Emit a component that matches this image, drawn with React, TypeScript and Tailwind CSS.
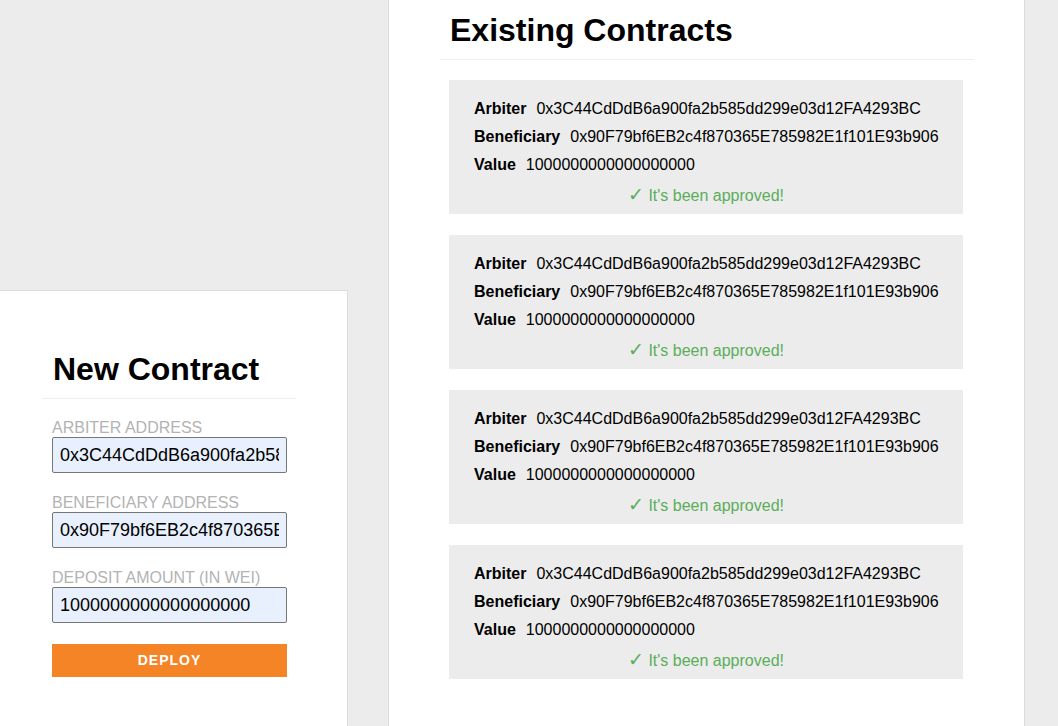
const ARBITER = "0x3C44CdDdB6a900fa2b585dd299e03d12FA4293BC";
const BENEFICIARY = "0x90F79bf6EB2c4f870365E785982E1f101E93b906";
const VALUE = "1000000000000000000";

const contracts = [1, 2, 3, 4].map((id) => ({ id, arbiter: ARBITER, beneficiary: BENEFICIARY, value: VALUE }));

function Field({ label, value }: { label: string; value: string }) {
  return (
    <div className="flex flex-col">
      <label className="text-[16px] leading-[20px] uppercase text-[#b3b3b3]">{label}</label>
      <input
        readOnly
        value={value}
        className="-mt-[1px] w-[235px] h-[36px] px-[7px] bg-[#e8f0fe] border border-[#767676] rounded-[2px] text-[18px] text-black outline-none"
      />
    </div>
  );
}

function ContractCard({ arbiter, beneficiary, value }: { arbiter: string; beneficiary: string; value: string }) {
  return (
    <div className="bg-[#ececec] w-[514px] pt-[15px] pb-[4px] px-[25px] text-[16px] text-black">
      <div className="leading-[28px]">
        <span className="font-bold">Arbiter</span>
        <span className="ml-[10px]">{arbiter}</span>
      </div>
      <div className="leading-[28px]">
        <span className="font-bold">Beneficiary</span>
        <span className="ml-[10px]">{beneficiary}</span>
      </div>
      <div className="leading-[28px]">
        <span className="font-bold">Value</span>
        <span className="ml-[10px]">{value}</span>
      </div>
      <div className="mt-[3px] leading-[28px] text-center text-[#5aae5a]">
        <span className="font-['DejaVu_Sans'] text-[19px] leading-[10px]">✓</span> It's been approved!
      </div>
    </div>
  );
}

export default function App() {
  return (
    <div
      className="h-[726px] overflow-hidden bg-[#ececec] flex"
      style={{ fontFamily: '"Liberation Sans", Arial, sans-serif' }}
    >
      <div className="w-[348px] pt-[290px] flex flex-col">
        <div className="flex-1 bg-white border-t border-r border-[#dcdcdc] pl-[42px] pt-[60px]">
          <div className="w-[254px]">
            <h1 className="text-[32px] font-bold leading-[37px] pl-[11px] pb-[10px] border-b border-[#eeeeee] text-black">
              New Contract
            </h1>
          </div>
          <div className="pl-[10px] pt-[19px] flex flex-col gap-[20px]">
            <Field label="Arbiter Address" value={ARBITER} />
            <Field label="Beneficiary Address" value={BENEFICIARY} />
            <Field label="Deposit Amount (in Wei)" value={VALUE} />
            <button className="mt-[1px] w-[235px] h-[33px] bg-[#f58427] text-white text-[14px] font-bold tracking-[1px]">
              DEPLOY
            </button>
          </div>
        </div>
      </div>

      <div className="ml-[40px] w-[637px] bg-white border-l border-r border-[#dcdcdc] pl-[51px] pt-[12px]">
        <div className="w-[534px]">
          <h1 className="text-[32px] font-bold leading-[37px] pl-[10px] pb-[10px] border-b border-[#eeeeee] text-black">
            Existing Contracts
          </h1>
        </div>
        <div className="pl-[9px] pt-[20px] flex flex-col gap-[21px]">
          {contracts.map((c) => (
            <ContractCard key={c.id} arbiter={c.arbiter} beneficiary={c.beneficiary} value={c.value} />
          ))}
        </div>
      </div>
    </div>
  );
}
